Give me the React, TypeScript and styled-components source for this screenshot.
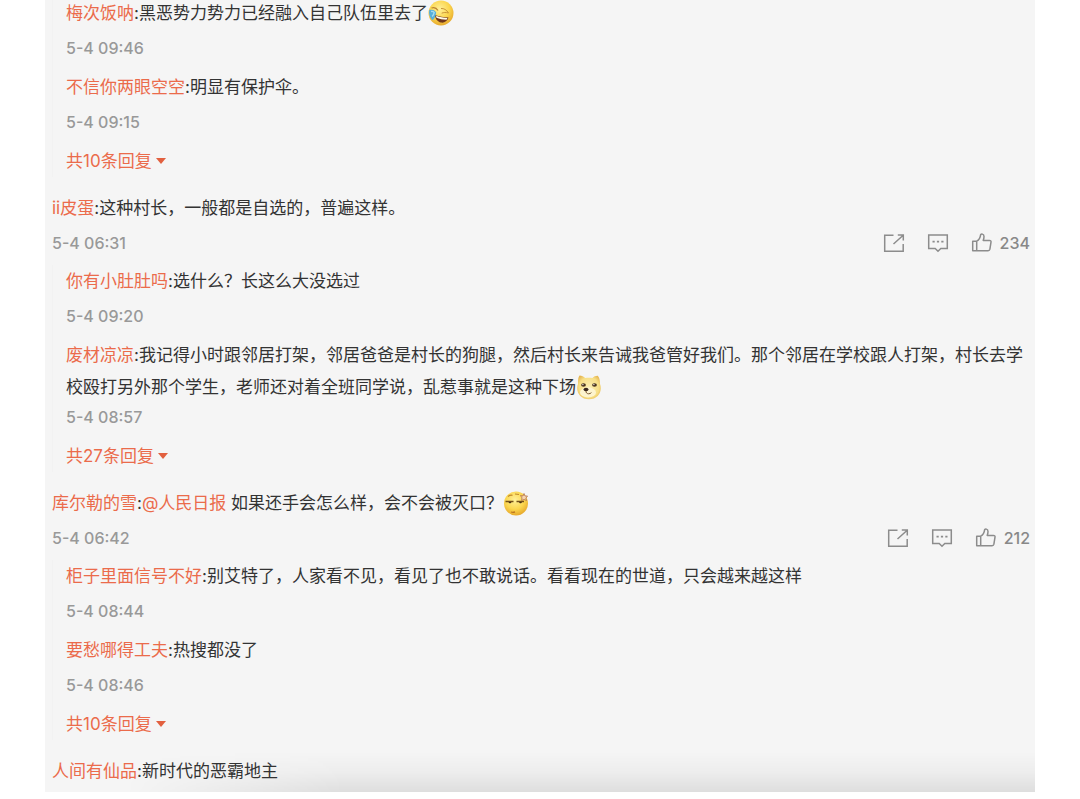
import React from 'react';
import styled, { createGlobalStyle } from 'styled-components';

const GlobalStyle = createGlobalStyle`
  * { box-sizing: border-box; }
  body {
    margin: 0;
    background: #fff;
    color: #333;
    font-family: Inter, "Noto Sans CJK SC", sans-serif;
    font-size: 17px;
  }
`;

const Panel = styled.main`
  position: relative;
  margin: 0 45px;
  padding: 0 5px 5px 7px;
  background: #f5f5f5;
  overflow: hidden;

  &::before {
    content: '';
    position: absolute;
    right: 0;
    bottom: 0;
    left: 0;
    height: 40px;
    background: linear-gradient(to bottom, rgba(0, 0, 0, 0), rgba(0, 0, 0, 0.03) 50%, rgba(0, 0, 0, 0.09));
    mask-image: linear-gradient(to right, transparent 80px, #000 300px);
  }
`;

const Thread = styled.div`
  position: relative;
  display: flex;
  flex-direction: column;
  gap: 15px;
  margin-top: -3px;
`;

const Comment = styled.article`
  display: flex;
  flex-direction: column;
  gap: 8px;
`;

const Replies = styled.div`
  display: flex;
  flex-direction: column;
  align-items: flex-start;
  gap: 9px;
  padding-left: 13px;
  border-left: 1px solid #f2f2f2;
`;

const Message = styled.p<{ $last?: boolean }>`
  min-height: ${(p) => (p.$last ? 32 : 37)}px;
  margin: 0;
  line-height: 32px;
`;

const UserLink = styled.a`
  color: #eb6b4b;
  text-decoration: none;
`;

const Meta = styled.div`
  display: flex;
  align-items: center;
  justify-content: space-between;
  height: 28px;
  color: #999;
  font-size: 16px;
  font-weight: 500;
  line-height: 28px;
`;

const Actions = styled.div`
  display: flex;
  align-items: center;
  gap: 22px;
`;

const ActionButton = styled.button`
  display: flex;
  align-items: center;
  gap: 7px;
  padding: 0;
  border: 0;
  background: none;
  color: #888;
  font: inherit;
  cursor: pointer;
`;

const MoreButton = styled.button`
  display: flex;
  align-items: center;
  gap: 4px;
  height: 32px;
  padding: 0;
  border: 0;
  background: none;
  color: #eb6b4b;
  font: inherit;
  line-height: 32px;
  cursor: pointer;
`;

const Caret = styled.span`
  border: 5px solid transparent;
  border-top: 6px solid #e2603f;
  border-bottom: 0;
`;

const Icon = styled.svg`
  display: block;
  width: 22px;
  height: 22px;
  fill: none;
  stroke: #8c8c8c;
  stroke-width: 1.5;
`;

const Face = styled.svg`
  display: inline-block;
  width: 26px;
  height: 26px;
  vertical-align: -7px;
`;

const FaceDefs = () => (
  <defs>
    <radialGradient id="skin" cx="0.45" cy="0.35" r="0.65">
      <stop offset="0" stopColor="#fff09a" />
      <stop offset="0.6" stopColor="#fbd64e" />
      <stop offset="1" stopColor="#e7a92c" />
    </radialGradient>
    <radialGradient id="fur" cx="0.5" cy="0.5" r="0.6">
      <stop offset="0" stopColor="#fbeeb4" />
      <stop offset="0.7" stopColor="#f7df86" />
      <stop offset="1" stopColor="#e5b44e" />
    </radialGradient>
  </defs>
);

const LaughFace = () => (
  <Face viewBox="0 0 26 26" role="img" aria-label="笑哭">
    <FaceDefs />
    <circle cx="13" cy="13" r="12.5" fill="url(#skin)" />
    <path d="M3.500 8c2.500-1 5 0 6.500 2.500" fill="none" stroke="#b98130" strokeWidth="1.2" />
    <path d="M13 8.500c3-.2 5.500 1.200 7.500 4.500-2.800-.8-4.800-.6-6.800.2" fill="none" stroke="#c99437" strokeWidth="1" />
    <path d="M7 15c4 1.300 8.500 2.500 13.500 2.500-1.200 3.700-4.500 5.700-7.500 5C9.500 21.800 7.300 19 7 15z" fill="#71371c" />
    <path d="M8 15.700c3.800 1.300 7.500 2.200 11.500 2.400l-1 1.600c-3.600 0-7-.6-10-1.900z" fill="#fffbe8" />
    <path d="M1.200 10c3.300-1 6 .3 7 2.500-.5 3.500-1.800 6.300-3.900 7.800C1.800 17.500.4 14 1.200 10z" fill="#58aedb" />
    <path d="M3 11.500c1.500-.3 2.600.2 3.200 1-.4 1.800-1 3-2 4" fill="none" stroke="#a7dcf0" strokeWidth="1.300" />
  </Face>
);

const DogeFace = () => (
  <Face viewBox="0 0 26 26" role="img" aria-label="doge">
    <FaceDefs />
    <path d="M2 10C2 6 2.200 3 3.500 1.500c2.200 0 4.200 1 5.700 2.600 2.400-.6 5-.6 7.200 0 1.500-1.500 3.500-2.400 5.300-2.300C23.500 3.500 24 6.500 24 10c2.800 7-1.800 15.300-11 15.300S-.8 17 2 10z" fill="url(#fur)" />
    <ellipse cx="12" cy="18.500" rx="8" ry="5" fill="#fdf4cf" />
    <ellipse cx="7.500" cy="11" rx="2.400" ry="1.700" fill="#49331f" />
    <ellipse cx="18.500" cy="11" rx="2.400" ry="1.700" fill="#49331f" />
    <circle cx="6.900" cy="10.600" r=".7" fill="#fff" />
    <circle cx="17.900" cy="10.600" r=".7" fill="#fff" />
    <ellipse cx="10" cy="15.500" rx="2.500" ry="1.800" fill="#38261d" />
    <path d="M10 17c-.2 1.500.8 2.800 2.600 2.800 1.300 0 2.200-.5 2.800-1.200" fill="none" stroke="#7b5730" strokeWidth="1" />
  </Face>
);

const SmirkFace = () => (
  <Face viewBox="0 0 26 26" role="img" aria-label="思考">
    <FaceDefs />
    <circle cx="13" cy="13.500" r="12" fill="url(#skin)" />
    <path d="M5 6.500c1.500-1.300 3-1.600 4.500-1.200M12 4l4 .5" fill="none" stroke="#c38a2c" strokeWidth="1.2" />
    <path d="M2.500 11.500h8M13.500 11.500h7.500" stroke="#735019" strokeWidth="1.700" />
    <path d="M5.500 12c.5 1.700 2.500 1.700 3 0zM16 12c.5 1.700 2.500 1.700 3 0z" fill="#4b3214" />
    <path d="M8 22c1.500.6 2.800.5 4-.1" fill="none" stroke="#bd761f" strokeWidth="1.200" />
    <path d="M17.500 5.500 20 6l1-2.500 1 2.500 2.500 0-1.700 2.300.8 2.200-2.600-1-2.400 1 .4-2.600z" fill="#f7d5b0" stroke="#b27248" strokeWidth=".8" />
  </Face>
);

const ShareIcon = () => (
  <Icon viewBox="0 0 22 22" aria-hidden="true">
    <path d="M10.500 3.200H1.700v16h18.500v-7.200M10.500 12 20.200 3.200M14.800 3h5.500v5.500" />
  </Icon>
);

const ReplyIcon = () => (
  <Icon viewBox="0 0 22 22" aria-hidden="true">
    <path d="M1.700 3h18.600v13.500h-6.500L11 19.200l-2.800-2.700H1.700z" />
    <path d="M5.500 9.700h2.200M9.900 9.700h2.200M14.300 9.700h2.200" strokeWidth="1.800" />
  </Icon>
);

const LikeIcon = () => (
  <Icon viewBox="0 0 22 22" aria-hidden="true">
    <path d="M1.700 9.200h4v9.500h-4zM5.700 9.200c2.300-1.300 3.600-3.500 3.900-6.300.2-1.300 3.400-1.300 3.400 1.500 0 1.500-.3 2.700-.8 4h6.300c1.200 0 1.700.7 1.500 1.800l-1.100 7c-.2 1-.8 1.500-1.800 1.500H5.700" strokeLinejoin="round" />
  </Icon>
);

const User = ({ name }: { name: string }) => <UserLink href="#">{name}</UserLink>;

interface EntryProps {
  user: string;
  time?: string;
  likes?: number;
  children: React.ReactNode;
}

const Entry = ({ user, time, likes, children }: EntryProps) => (
  <div>
    <Message $last={!time}>
      <User name={user} />:{children}
    </Message>
    {time && (
      <Meta>
        <time>{time}</time>
        {likes !== undefined && (
          <Actions>
            <ActionButton aria-label="转发"><ShareIcon /></ActionButton>
            <ActionButton aria-label="评论"><ReplyIcon /></ActionButton>
            <ActionButton aria-label={`赞 ${likes}`}><LikeIcon />{likes}</ActionButton>
          </Actions>
        )}
      </Meta>
    )}
  </div>
);

const More = ({ count }: { count: number }) => (
  <MoreButton>
    <span>共{count}条回复</span>
    <Caret />
  </MoreButton>
);

export default function App() {
  return (
    <>
      <GlobalStyle />
      <Panel lang="zh-CN">
        <Thread>
          <Comment>
            <Replies>
              <Entry user="梅次饭呐" time="5-4 09:46">黑恶势力势力已经融入自己队伍里去了<LaughFace /></Entry>
              <Entry user="不信你两眼空空" time="5-4 09:15">明显有保护伞。</Entry>
              <More count={10} />
            </Replies>
          </Comment>
          <Comment>
            <Entry user="ii皮蛋" time="5-4 06:31" likes={234}>这种村长，一般都是自选的，普遍这样。</Entry>
            <Replies>
              <Entry user="你有小肚肚吗" time="5-4 09:20">选什么？长这么大没选过</Entry>
              <Entry user="废材凉凉" time="5-4 08:57">
                我记得小时跟邻居打架，邻居爸爸是村长的狗腿，然后村长来告诫我爸管好我们。那个邻居在学校跟人打架，村长去学校殴打另外那个学生，老师还对着全班同学说，乱惹事就是这种下场<DogeFace />
              </Entry>
              <More count={27} />
            </Replies>
          </Comment>
          <Comment>
            <Entry user="库尔勒的雪" time="5-4 06:42" likes={212}>
              <User name="@人民日报" /> 如果还手会怎么样，会不会被灭口？<SmirkFace />
            </Entry>
            <Replies>
              <Entry user="柜子里面信号不好" time="5-4 08:44">别艾特了，人家看不见，看见了也不敢说话。看看现在的世道，只会越来越这样</Entry>
              <Entry user="要愁哪得工夫" time="5-4 08:46">热搜都没了</Entry>
              <More count={10} />
            </Replies>
          </Comment>
          <Comment>
            <Entry user="人间有仙品">新时代的恶霸地主</Entry>
          </Comment>
        </Thread>
      </Panel>
    </>
  );
}
